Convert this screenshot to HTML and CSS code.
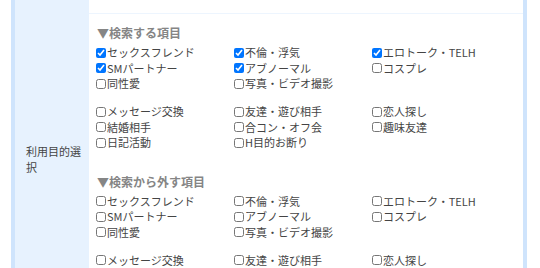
FILE: index.html
```html
<!DOCTYPE html>
<html lang="ja">
<head>
<meta charset="utf-8">
<link rel="stylesheet" href="styles.css">
</head>
<body>
<div class="wrap">
  <div class="table">
    <div class="th th-prev"></div>
    <div class="td td-prev"></div>
    <div class="th"><span class="th-text">利用目的選択</span></div>
    <div class="td">
      <section class="sec">
        <h3 class="sec-title">▼検索する項目</h3>
        <div class="grid">
          <label class="opt"><input type="checkbox" checked>セックスフレンド</label>
          <label class="opt"><input type="checkbox" checked>不倫・浮気</label>
          <label class="opt"><input type="checkbox" checked>エロトーク・TELH</label>
          <label class="opt"><input type="checkbox" checked>SMパートナー</label>
          <label class="opt"><input type="checkbox" checked>アブノーマル</label>
          <label class="opt"><input type="checkbox">コスプレ</label>
          <label class="opt"><input type="checkbox">同性愛</label>
          <label class="opt"><input type="checkbox">写真・ビデオ撮影</label>
        </div>
        <div class="grid grid-b">
          <label class="opt"><input type="checkbox">メッセージ交換</label>
          <label class="opt"><input type="checkbox">友達・遊び相手</label>
          <label class="opt"><input type="checkbox">恋人探し</label>
          <label class="opt"><input type="checkbox">結婚相手</label>
          <label class="opt"><input type="checkbox">合コン・オフ会</label>
          <label class="opt"><input type="checkbox">趣味友達</label>
          <label class="opt"><input type="checkbox">日記活動</label>
          <label class="opt"><input type="checkbox">H目的お断り</label>
        </div>
      </section>
      <section class="sec">
        <h3 class="sec-title">▼検索から外す項目</h3>
        <div class="grid">
          <label class="opt"><input type="checkbox">セックスフレンド</label>
          <label class="opt"><input type="checkbox">不倫・浮気</label>
          <label class="opt"><input type="checkbox">エロトーク・TELH</label>
          <label class="opt"><input type="checkbox">SMパートナー</label>
          <label class="opt"><input type="checkbox">アブノーマル</label>
          <label class="opt"><input type="checkbox">コスプレ</label>
          <label class="opt"><input type="checkbox">同性愛</label>
          <label class="opt"><input type="checkbox">写真・ビデオ撮影</label>
        </div>
        <div class="grid grid-b">
          <label class="opt"><input type="checkbox">メッセージ交換</label>
          <label class="opt"><input type="checkbox">友達・遊び相手</label>
          <label class="opt"><input type="checkbox">恋人探し</label>
          <label class="opt"><input type="checkbox">結婚相手</label>
          <label class="opt"><input type="checkbox">合コン・オフ会</label>
          <label class="opt"><input type="checkbox">趣味友達</label>
          <label class="opt"><input type="checkbox">日記活動</label>
          <label class="opt"><input type="checkbox">H目的お断り</label>
        </div>
      </section>
    </div>
  </div>
</div>
</body>
</html>
```
FILE: styles.css
```css
html, body {
  margin: 0;
  padding: 0;
  background: #ffffff;
}
body {
  font-family: "Noto Sans CJK JP", "Noto Sans", sans-serif;
  font-size: 11px;
  color: #444444;
}
.wrap {
  padding-left: 11px;
  width: 516px;
}
.table {
  display: grid;
  grid-template-columns: 74px 1fr;
  border-left: 4px solid #cfe4fc;
  border-right: 4px solid #cfe4fc;
}
.th {
  background: #e7f2fe;
  border-top: 1px solid #e7f2fe;
  display: flex;
  align-items: center;
  padding: 0 7px 0 11px;
}
.th-text {
  font-size: 11px;
  line-height: 16px;
  color: #444444;
}
.td {
  border-top: 1px solid #edf5fe;
  padding: 11px 0 4px 7px;
}
.th-prev, .td-prev {
  height: 13px;
  border-top: 0;
  padding-top: 0;
  padding-bottom: 0;
}
.sec + .sec {
  margin-top: 23px;
}
.sec-title {
  margin: 0 0 4px 1px;
  font-size: 12px;
  line-height: 16px;
  font-weight: bold;
  color: #858585;
}
.grid {
  display: grid;
  grid-template-columns: repeat(3, 138px);
}
.grid-b {
  margin-top: 12.5px;
}
.opt {
  display: flex;
  align-items: center;
  height: 15.5px;
  line-height: 15.5px;
  white-space: nowrap;
}
.opt input {
  width: 10px;
  height: 10px;
  margin: 0 1px 0 0;
  flex: none;
}
```
